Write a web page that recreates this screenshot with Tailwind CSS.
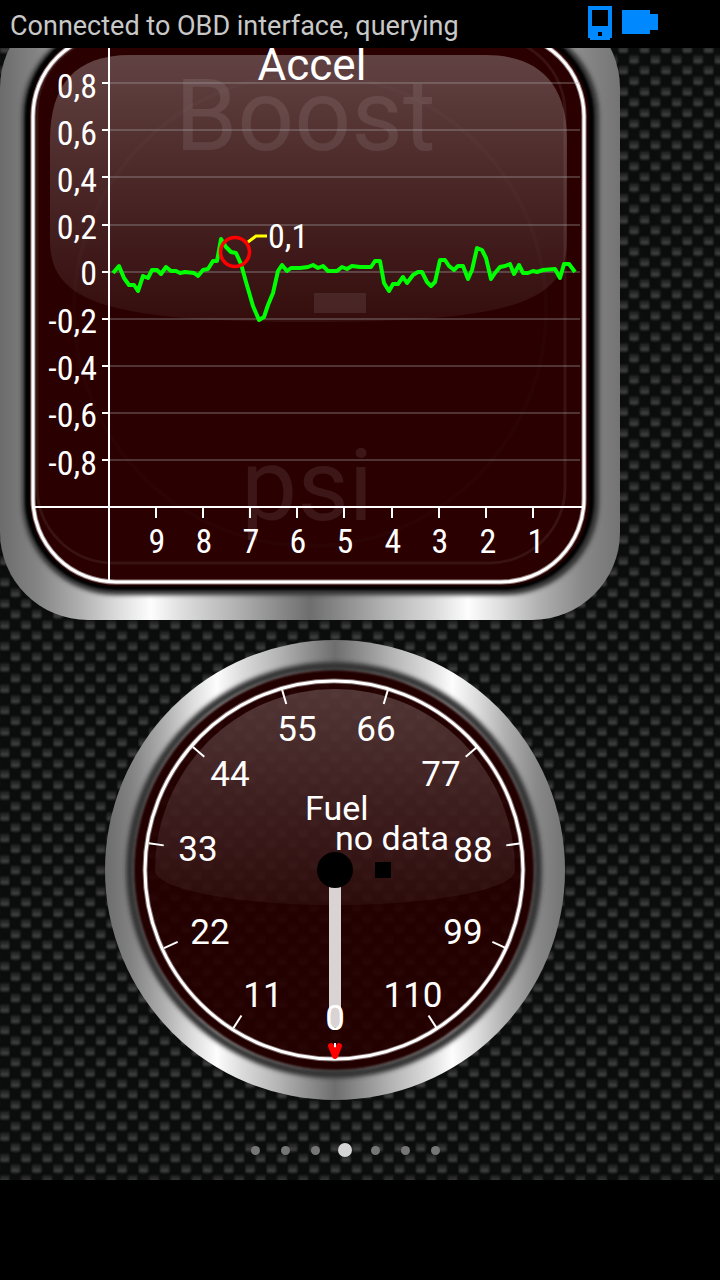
<!DOCTYPE html>
<html lang="en">
<head>
    <meta charset="UTF-8">
    <meta name="viewport" content="width=device-width, initial-scale=1.0">
    <title>OBD Dashboard</title>
    <script src="https://cdn.jsdelivr.net/npm/@tailwindcss/browser@4"></script>
</head>
<body class="bg-black min-h-screen font-['Roboto',sans-serif]">
    <!-- Status bar -->
    <header class="flex h-12 items-center bg-black pl-[10px] pr-[62px]">
        <p class="flex-1 whitespace-nowrap pt-1 text-[27px] leading-8 text-[#c8c8c8]">Connected to OBD interface, querying</p>
        <div class="flex items-start gap-[10px] pb-[2px]">
            <svg class="h-[34px] w-6" viewBox="0 0 24 34" fill="#0088ff" role="img" aria-label="Device">
                <path fill-rule="evenodd" d="M0 0H24V32H22V34H2V32H0ZM4 4V20H20V4ZM10 26V30H14V26Z"/>
            </svg>
            <svg class="mt-1 h-6 w-9" viewBox="0 0 36 24" fill="#0088ff" role="img" aria-label="Adapter">
                <path d="M0 0H28V4H36V20H28V24H0Z"/>
            </svg>
        </div>
    </header>

    <main class="relative overflow-hidden bg-[#0b0d0c]">
        <!-- Carbon fibre background -->
        <svg class="absolute inset-0 h-full w-full" aria-hidden="true">
            <defs>
                <linearGradient id="fibre" x1="0" y1="0" x2="0" y2="1">
                    <stop offset="0" stop-color="#1a1b1b"/>
                    <stop offset=".35" stop-color="#282929"/>
                    <stop offset=".75" stop-color="#424242"/>
                    <stop offset="1" stop-color="#2a2b2b"/>
                </linearGradient>
                <filter id="soft"><feGaussianBlur stdDeviation="3"/></filter>
                <pattern id="carbon" width="64" height="64" patternUnits="userSpaceOnUse" patternTransform="translate(650 518) scale(.3333)">
                    <rect width="64" height="64" fill="#0b0d0c"/>
                    <g fill="url(#fibre)" filter="url(#soft)">
                        <rect x="2" y="3" width="28" height="26" rx="6"/>
                        <rect x="34" y="35" width="28" height="26" rx="6"/>
                    </g>
                </pattern>
            </defs>
            <rect width="100%" height="100%" fill="url(#carbon)"/>
        </svg>

        <!-- Acceleration graph -->
        <svg class="relative block w-full max-w-[620px]" viewBox="0 48 620 572" role="img" aria-label="Accel graph">
            <defs>
                <linearGradient id="metal">
                    <stop offset="0" stop-color="#6c6c6c"/>
                    <stop offset=".06" stop-color="#848484"/>
                    <stop offset=".13" stop-color="#b0b0b0"/>
                    <stop offset=".19" stop-color="#dcdcdc"/>
                    <stop offset=".243" stop-color="#fdfdfd"/>
                    <stop offset=".3" stop-color="#dadada"/>
                    <stop offset=".38" stop-color="#b2b2b2"/>
                    <stop offset=".5" stop-color="#6e6e6e"/>
                    <stop offset=".62" stop-color="#b2b2b2"/>
                    <stop offset=".7" stop-color="#dadada"/>
                    <stop offset=".755" stop-color="#fdfdfd"/>
                    <stop offset=".81" stop-color="#dcdcdc"/>
                    <stop offset=".87" stop-color="#b0b0b0"/>
                    <stop offset=".94" stop-color="#888"/>
                    <stop offset="1" stop-color="#747474"/>
                </linearGradient>
                <linearGradient id="gloss" x1="0" y1="0" x2="0" y2="1">
                    <stop offset="0" stop-color="#fff" stop-opacity=".26"/>
                    <stop offset=".5" stop-color="#fff" stop-opacity=".15"/>
                    <stop offset="1" stop-color="#fff" stop-opacity=".05"/>
                </linearGradient>
                <filter id="blur2"><feGaussianBlur stdDeviation="2"/></filter>
                <filter id="blur1"><feGaussianBlur stdDeviation="1"/></filter>
            </defs>
            <rect width="620" height="620" rx="88" fill="url(#metal)"/>
            <rect x="22" y="22" width="577" height="573" rx="94" fill="#333" filter="url(#blur2)"/>
            <rect x="25" y="25" width="569" height="565" rx="91" filter="url(#blur1)"/>
            <rect x="30" y="30" width="559" height="556" rx="86" fill="#2a0000" filter="url(#blur1)"/>

            <!-- Dials lying under this one, barely visible -->
            <g fill="#fff" fill-opacity=".018" font-size="40">
                <text x="140" y="190">68</text>
                <text x="240" y="190">Speed</text>
                <text x="410" y="190">119</text>
                <text x="232" y="230">no data</text>
                <text x="110" y="290">51</text>
                <text x="450" y="290">136</text>
                <text x="112" y="397">34</text>
                <text x="436" y="397">153</text>
                <text x="184" y="479">17</text>
                <text x="370" y="479">170</text>
                <circle cx="310" cy="310" r="236" fill="none" stroke="#fff" stroke-opacity=".015" stroke-width="4"/>
            </g>
            <rect x="37" y="37" width="528" height="526" rx="76" fill="none" stroke="#fff" stroke-opacity=".07" stroke-width="3"/>
            <path d="M50 140C50 85 75 55 130 55H485C540 55 567 85 567 140V240C567 300 520 322 309 322C100 322 50 300 50 240Z" fill="url(#gloss)"/>
            <g fill="#fff" fill-opacity=".09">
                <text x="175" y="150" font-size="100">Boost</text>
                <rect x="314" y="293" width="52" height="20"/>
                <text x="241" y="520" font-size="100">psi</text>
            </g>

            <rect x="33" y="33" width="551" height="549" rx="83" fill="none" stroke="#fff" stroke-opacity=".5" stroke-width="5"/>
            <rect x="33" y="33" width="551" height="549" rx="83" fill="none" stroke="#fff" stroke-width="3"/>

            <path d="M109 83H580M109 130H580M109 177H580M109 225H580M109 272H580M109 319H580M109 366H580M109 413H580M109 460H580" stroke="#aaa" stroke-opacity=".42" stroke-width="1.5"/>
            <path d="M109 40V581M35 507H583M102 83H109M102 130H109M102 177H109M102 225H109M102 272H109M102 319H109M102 366H109M102 413H109M102 460H109M156 507V518M203 507V518M250 507V518M297 507V518M344 507V518M392 507V518M439 507V518M486 507V518M533 507V518" stroke="#fff" stroke-width="2"/>

            <text x="312" y="80" font-size="44" text-anchor="middle" fill="#fff">Accel</text>
            <g class="font-['Roboto_Condensed','Liberation_Sans_Narrow',Roboto,sans-serif]" font-size="34" fill="#fff">
                <g text-anchor="end">
                    <text x="97" y="98">0,8</text>
                    <text x="97" y="145">0,6</text>
                    <text x="97" y="192">0,4</text>
                    <text x="97" y="239">0,2</text>
                    <text x="97" y="285">0</text>
                    <text x="97" y="333">-0,2</text>
                    <text x="97" y="380">-0,4</text>
                    <text x="97" y="427">-0,6</text>
                    <text x="97" y="475">-0,8</text>
                </g>
                <g text-anchor="middle">
                    <text x="157" y="553">9</text>
                    <text x="204" y="553">8</text>
                    <text x="251" y="553">7</text>
                    <text x="298" y="553">6</text>
                    <text x="345" y="553">5</text>
                    <text x="393" y="553">4</text>
                    <text x="440" y="553">3</text>
                    <text x="488" y="553">2</text>
                    <text x="536" y="553">1</text>
                </g>
                <text x="268" y="248">0,1</text>
            </g>

            <polyline fill="none" stroke="#0f0" stroke-width="4" stroke-linejoin="round" points="113,273 119,266 124,278 129,285 134,285 138,291 143,276 148,278 152,270 157,270 161,274 166,267 171,271 176,271 180,273 185,272 194,273 198,276 203,270 208,269 213,261 217,261 221,239 226,247 231,252 236,253 241,264 246,282 253,306 259,320 264,317 268,305 273,293 278,271 282,265 287,271 291,268 300,268 308,267 313,265 318,268 323,266 328,271 337,271 342,267 347,269 352,266 360,267 371,267 375,261 380,261 384,283 389,291 393,284 398,284 403,277 407,283 413,275 418,272 422,272 427,282 431,286 435,282 440,260 445,260 449,266 454,270 458,266 463,266 468,279 472,270 477,248 482,250 486,258 491,279 495,273 500,267 505,266 510,264 514,274 519,265 523,273 528,273 533,271 537,272 543,270 555,269 560,278 564,264 569,264 575,272"/>
            <circle cx="235" cy="252" r="14.5" fill="none" stroke="#f00" stroke-width="3.5"/>
            <path d="M248 242L256 236H267" fill="none" stroke="#ff0" stroke-width="3"/>
        </svg>

        <!-- Fuel gauge -->
        <div class="relative flex justify-center pr-[50px] pt-5">
            <svg class="block w-full max-w-[460px]" viewBox="105 640 460 460" role="img" aria-label="Fuel gauge">
                <circle cx="335" cy="870" r="230" fill="url(#metal)"/>
                <circle cx="334" cy="870" r="204" fill="none" stroke="#333" stroke-width="8" filter="url(#blur2)"/>
                <circle cx="334" cy="870" r="200" fill="#200000" filter="url(#blur1)"/>
                <circle cx="334" cy="870" r="189" fill="#270000"/>
                <circle cx="334" cy="870" r="189" fill="url(#carbon)" fill-opacity=".1"/>
                <path d="M155 870A180 181 0 0 1 515 870C515 890 430 905 335 905C240 905 155 890 155 870Z" fill="url(#gloss)" fill-opacity=".8"/>
                <circle cx="334" cy="870" r="189" fill="none" stroke="#fff" stroke-opacity=".4" stroke-width="5"/>
                <circle cx="334" cy="870" r="189" fill="none" stroke="#fff" stroke-width="3"/>
                <g stroke="#fff" stroke-width="2">
                    <path d="M335 1043V1058"/>
                    <path d="M335 1043V1058" transform="rotate(32.73 335 870)"/>
                    <path d="M335 1043V1058" transform="rotate(65.45 335 870)"/>
                    <path d="M335 1043V1058" transform="rotate(98.18 335 870)"/>
                    <path d="M335 1043V1058" transform="rotate(130.91 335 870)"/>
                    <path d="M335 1043V1058" transform="rotate(163.64 335 870)"/>
                    <path d="M335 1043V1058" transform="rotate(196.36 335 870)"/>
                    <path d="M335 1043V1058" transform="rotate(229.09 335 870)"/>
                    <path d="M335 1043V1058" transform="rotate(261.82 335 870)"/>
                    <path d="M335 1043V1058" transform="rotate(294.55 335 870)"/>
                    <path d="M335 1043V1058" transform="rotate(327.27 335 870)"/>
                </g>
                <rect x="329" y="880" width="12" height="147" fill="#dad3d3"/>
                <circle cx="335" cy="870" r="18"/>
                <rect x="375" y="862" width="16" height="16"/>
                <g font-size="35" text-anchor="middle" fill="#fff">
                    <text x="335" y="1030">0</text>
                    <text x="263" y="1007">11</text>
                    <text x="210" y="944">22</text>
                    <text x="198" y="861">33</text>
                    <text x="230" y="786">44</text>
                    <text x="297" y="741">55</text>
                    <text x="376" y="741">66</text>
                    <text x="441" y="786">77</text>
                    <text x="473" y="862">88</text>
                    <text x="463" y="944">99</text>
                    <text x="413" y="1007">110</text>
                </g>
                <g font-size="34" fill="#fff">
                    <text x="305" y="820">Fuel</text>
                    <text x="335" y="850">no data</text>
                </g>
                <path d="M331 1046L335 1056L339 1046" fill="none" stroke="#f00" stroke-width="6" stroke-linecap="round" stroke-linejoin="round"/>
                <path d="M335 1043V1047" stroke="#fff" stroke-width="2"/>
            </svg>
        </div>

        <!-- Page indicator -->
        <nav class="relative flex justify-center pr-[30px] pt-5" aria-label="Pages">
            <button type="button" class="flex h-[60px] w-[30px] items-center justify-center" aria-label="Page 1"><span class="size-[9px] rounded-full bg-[#767676]"></span></button>
            <button type="button" class="flex h-[60px] w-[30px] items-center justify-center" aria-label="Page 2"><span class="size-[9px] rounded-full bg-[#767676]"></span></button>
            <button type="button" class="flex h-[60px] w-[30px] items-center justify-center" aria-label="Page 3"><span class="size-[9px] rounded-full bg-[#767676]"></span></button>
            <button type="button" class="flex h-[60px] w-[30px] items-center justify-center" aria-label="Page 4" aria-current="page"><span class="size-[14px] rounded-full bg-[#d5d5d5]"></span></button>
            <button type="button" class="flex h-[60px] w-[30px] items-center justify-center" aria-label="Page 5"><span class="size-[9px] rounded-full bg-[#767676]"></span></button>
            <button type="button" class="flex h-[60px] w-[30px] items-center justify-center" aria-label="Page 6"><span class="size-[9px] rounded-full bg-[#767676]"></span></button>
            <button type="button" class="flex h-[60px] w-[30px] items-center justify-center" aria-label="Page 7"><span class="size-[9px] rounded-full bg-[#767676]"></span></button>
        </nav>
    </main>
</body>
</html>
